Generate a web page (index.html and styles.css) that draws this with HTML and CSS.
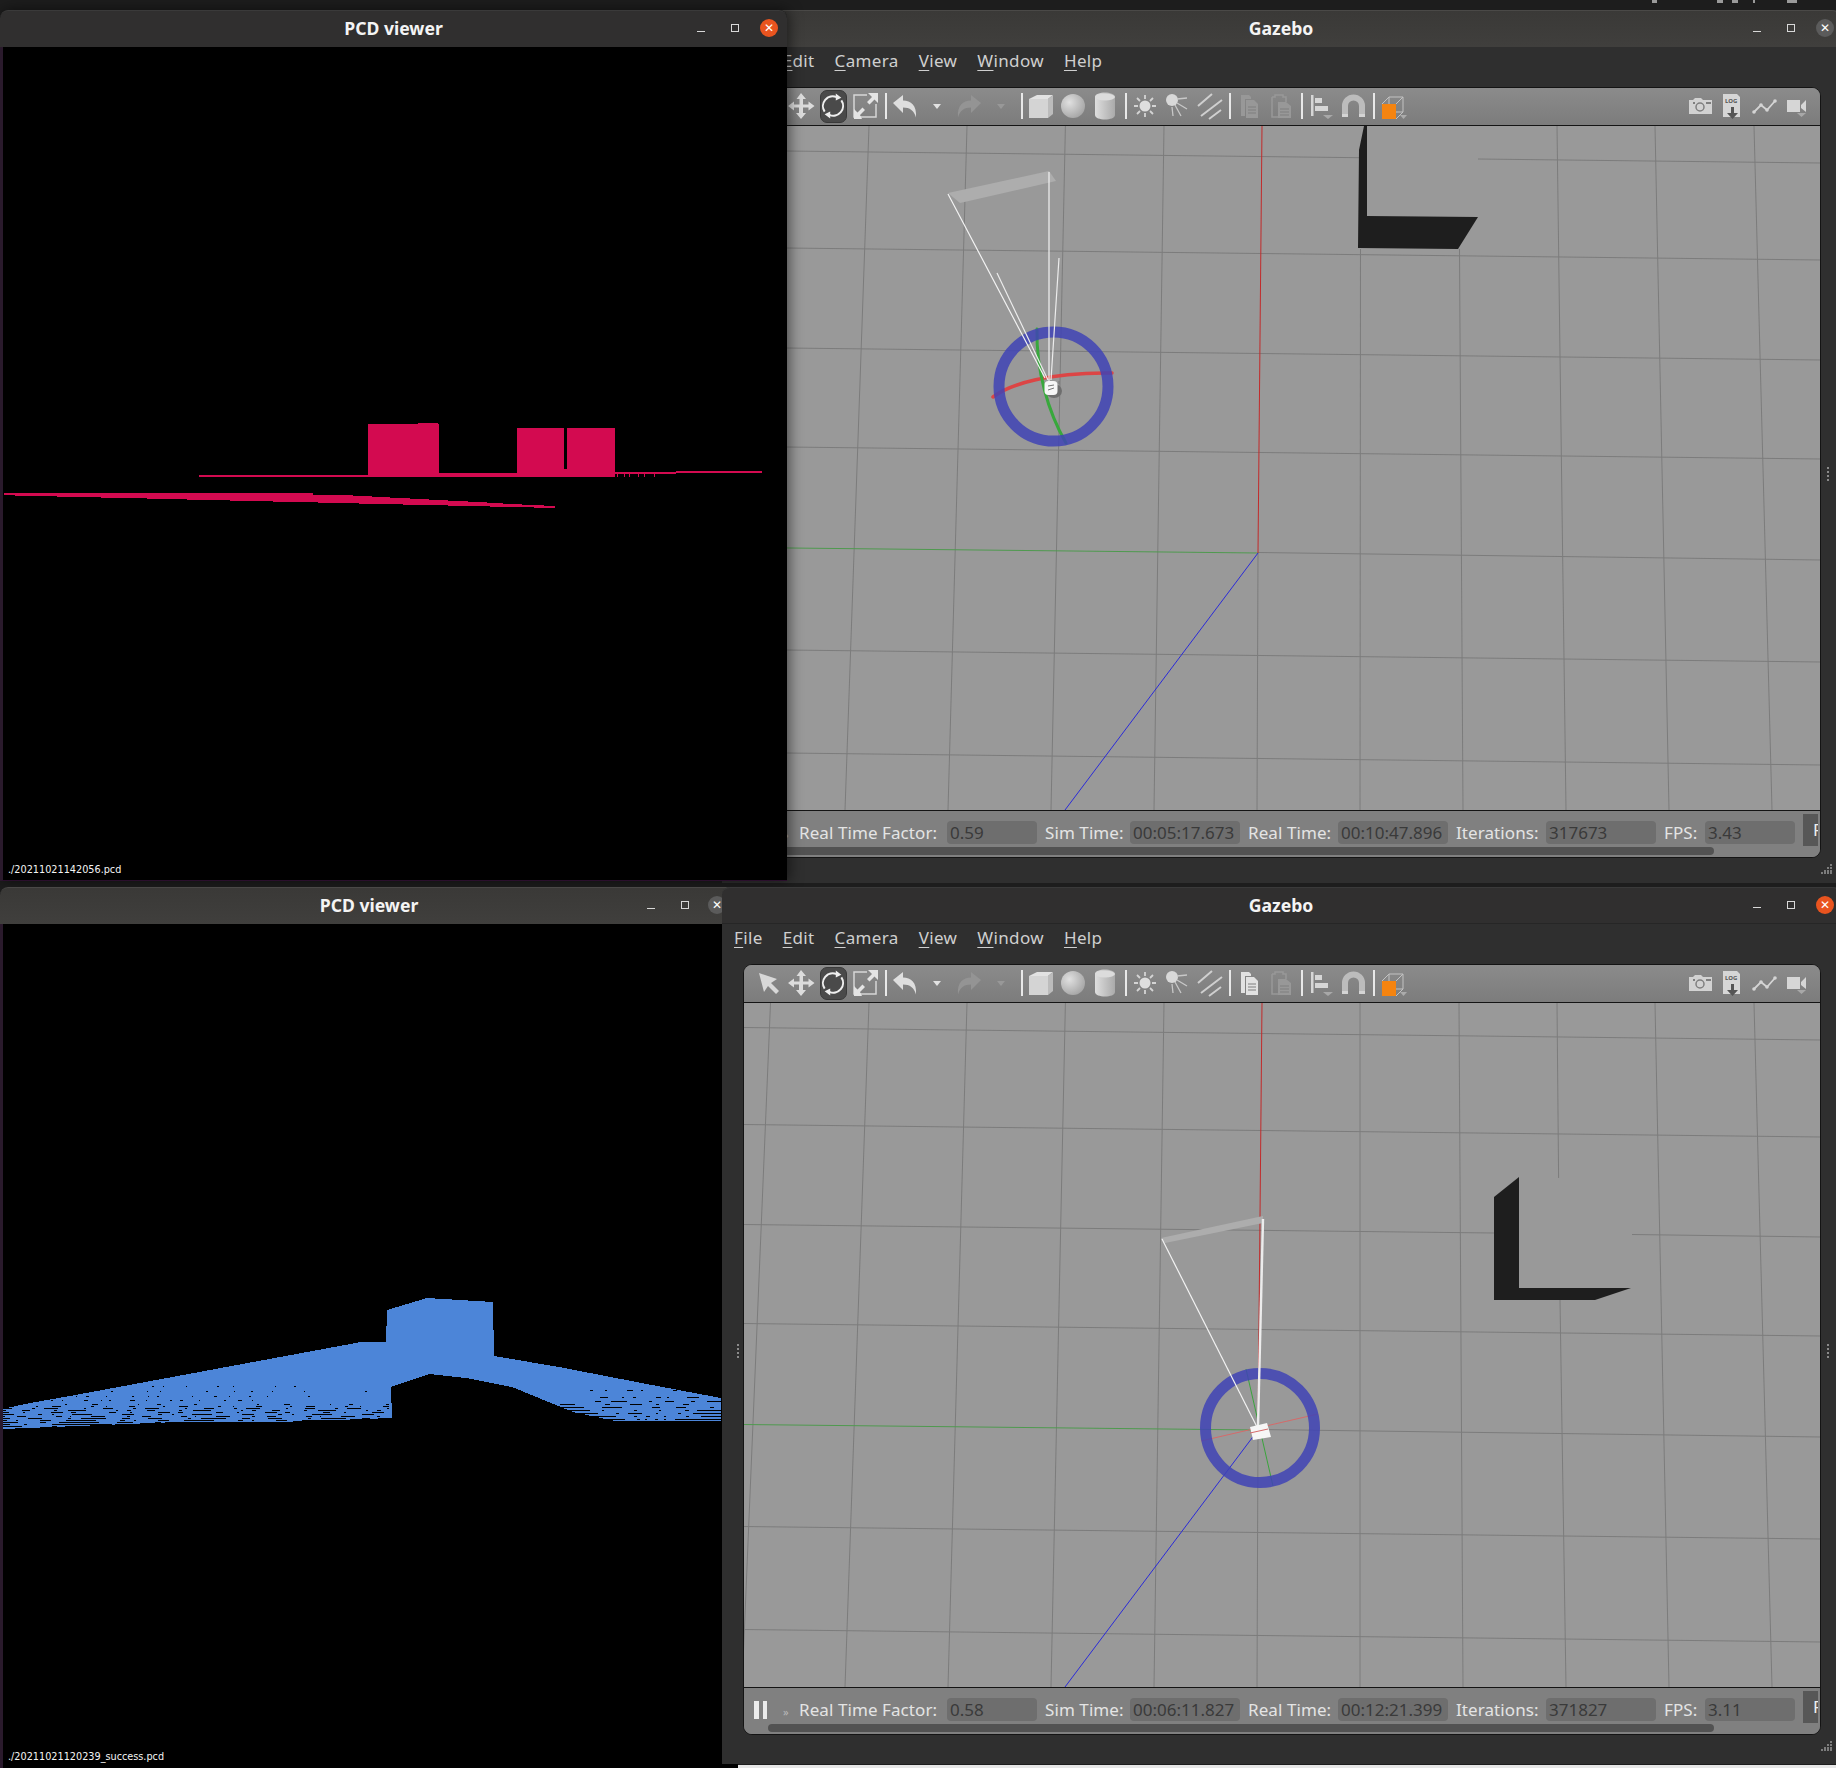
FILE: index.html
```html
<!DOCTYPE html>
<html lang="en">
<head>
<meta charset="utf-8">
<title>PCD viewer and Gazebo</title>
<link rel="stylesheet" href="styles.css">
</head>
<body>
<svg class="defs" width="0" height="0" aria-hidden="true">
  <defs>
    <radialGradient id="g-sphere" cx="35%" cy="35%" r="75%"><stop offset="0" stop-color="#e0e0e0"/><stop offset="1" stop-color="#a2a2a2"/></radialGradient>
    <linearGradient id="g-cyl"><stop offset="0" stop-color="#dedede"/><stop offset="1" stop-color="#aaaaaa"/></linearGradient>
    <symbol id="i-arrow" viewBox="0 0 28 28"><path fill="#d8d8d8" d="M4 4l18 6-6 4 8 8-3 3-8-8-4 6z"/></symbol>
    <symbol id="i-move" viewBox="0 0 28 28"><path fill="#dcdcdc" d="M14 1l5 6h-3v5.500h5.500V9.500l6 4.500-6 4.500v-3h-5.500V21h3l-5 6-5-6h3v-5.500H7v3L1 14l6-4.500v3h5.500V7h-3z"/></symbol>
    <symbol id="i-rotate" viewBox="0 0 28 28"><g fill="none" stroke="#eee" stroke-width="2.200"><path d="M5 20A10.500 10.500 0 0 1 18 4.500"/><path d="M23 8A10.500 10.500 0 0 1 10 23.500"/></g><path fill="#eee" d="M17 .5l6 4.500-6 3zM11 27.500l-6-4.500 6-3z"/></symbol>
    <symbol id="i-scale" viewBox="0 0 28 28"><path fill="none" stroke="#d6d6d6" stroke-width="1.500" d="M16 3H3v22h22V12"/><path fill="#e4e4e4" d="M27 1v10l-3.500-3.500-5 5-2.500-2.500 5-5L17 1zM3 27V17l3.500 3.500 5-5 2.500 2.500-5 5L11 27z"/></symbol>
    <symbol id="i-undo" viewBox="0 0 28 28"><path fill="#dedede" d="M2 11l10-8v5.500c8 0 14 5 13 17-2-7-6-10-13-10V21z"/></symbol>
    <symbol id="i-redo" viewBox="0 0 28 28"><path fill="#949494" d="M26 11L16 3v5.500c-8 0-14 5-13 17 2-7 6-10 13-10V21z"/></symbol>
    <symbol id="i-drop" viewBox="0 0 28 28"><path fill="currentColor" d="M10 12h8l-4 5z"/></symbol>
    <symbol id="i-box" viewBox="0 0 28 28"><path fill="#d4d4d4" d="M2 7h19v19H2z"/><path fill="#e2e2e2" d="M2 7l8-4h16l-5 4z"/><path fill="#bcbcbc" d="M21 7l5-4v19l-5 4z"/></symbol>
    <symbol id="i-sphere" viewBox="0 0 28 28"><circle cx="14" cy="14" r="12" fill="url(#g-sphere)"/></symbol>
    <symbol id="i-cyl" viewBox="0 0 28 28"><path fill="url(#g-cyl)" d="M4 5c0-6 20-6 20 0v18c0 6-20 6-20 0z"/><ellipse cx="14" cy="5" rx="10" ry="3.500" fill="#dcdcdc"/></symbol>
    <symbol id="i-sun" viewBox="0 0 28 28"><circle cx="14" cy="14" r="5.500" fill="#dedede"/><g stroke="#d4d4d4" stroke-width="1.800"><path d="M14 3v4M14 21v4M3 14h4M21 14h4M6 6l3 3M19 19l3 3M22 6l-3 3M9 19l-3 3"/></g></symbol>
    <symbol id="i-spot" viewBox="0 0 28 28"><circle cx="9" cy="8" r="6" fill="#d8d8d8"/><g stroke="#c8c8c8" stroke-width="1.300"><path d="M14 7l10-1M14 11l10 6M12 13l6 11M9 15l1 9"/></g></symbol>
    <symbol id="i-dir" viewBox="0 0 28 28"><g stroke="#cfcfcf" stroke-width="2"><path d="M3 14L17 2M6 24l21-16M14 27l12-9"/></g></symbol>
    <symbol id="i-copy" viewBox="0 0 28 28"><path fill="currentColor" d="M6 3h8l2 2v2H10v17H6z"/><path fill="currentColor" d="M11 8h8l4 4v14H11z"/><path stroke="#7f7f7f" d="M13 15h8M13 18h8M13 21h8"/></symbol>
    <symbol id="i-paste" viewBox="0 0 28 28"><path fill="none" stroke="currentColor" stroke-width="1.500" d="M5 5h3V3h8v2h3v5M5 5v20h6"/><path fill="currentColor" d="M11 10h8l5 4v12H11z"/><path stroke="#7f7f7f" d="M13 17h9M13 20h9M13 23h9"/></symbol>
    <symbol id="i-align" viewBox="0 0 28 28"><path fill="#d6d6d6" d="M4 3h2.500v21H4zM8 6h7v5H8zM8 14h13v5H8z"/><path fill="#a8a8a8" d="M16 23h10l-5 4z"/></symbol>
    <symbol id="i-magnet" viewBox="0 0 28 28"><path fill="none" stroke="#bcbcbc" stroke-width="6" d="M6 25V14a8.500 8.500 0 0 1 17 0v11"/><path stroke="#d4d4d4" stroke-width="6" d="M6 22v3M23 22v3"/></symbol>
    <symbol id="i-view" viewBox="0 0 28 28"><path fill="none" stroke="#c2c2c2" d="M3 12l7-7h14v15l-7 7M10 5v15h14M17 12l7-7"/><path fill="#f58410" d="M3 12h14v15H3z"/><path fill="#ababab" d="M21 23h7l-3.500 4z"/></symbol>
    <symbol id="i-cam" viewBox="0 0 28 28"><path fill="#d2d2d2" d="M3 8h4l2-2h6l2 2h9v14H3z"/><circle cx="14" cy="15" r="4" fill="none" stroke="#7f7f7f" stroke-width="1.500"/><path fill="#7f7f7f" d="M20 10h5v2h-5zM7 10h2v2H7z"/></symbol>
    <symbol id="i-log" viewBox="0 0 28 28"><path fill="#d6d6d6" d="M5 2h14l3 3v20H5z"/><text x="7" y="11" class="log-text">LOG</text><path fill="#555" d="M13 15h3v6h4l-5.500 6L9 21h4z"/></symbol>
    <symbol id="i-plot" viewBox="0 0 28 28"><path fill="none" stroke="#d4d4d4" stroke-width="1.800" d="M4 20l7-7 6 5 8-9"/><g fill="#d4d4d4"><circle cx="4" cy="20" r="1.800"/><circle cx="11" cy="13" r="1.800"/><circle cx="17" cy="18" r="1.800"/><circle cx="25" cy="9" r="1.800"/></g></symbol>
    <symbol id="i-video" viewBox="0 0 28 28"><path fill="#d6d6d6" d="M5 8h13v12H5zM19 13l5-5v12l-5-4z"/><path fill="#a8a8a8" d="M15 21h9l-4.500 4z"/></symbol>
  </defs>
</svg>

<div class="top-marks"><i class="mark m-a"></i><i class="mark m-b"></i><i class="mark m-b"></i><i class="mark m-c"></i><i class="mark m-d"></i></div>

<section class="gazebo gazebo-top">
  <header class="title-bar light">
    <span></span><span class="title">Gazebo</span>
    <div class="controls"><span class="ctl"><i class="min"></i></span><span class="ctl"><i class="max"></i></span><span class="ctl"><i class="close gray">✕</i></span></div>
  </header>
  <nav class="menu"><span><u>F</u>ile</span><span><u>E</u>dit</span><span><u>C</u>amera</span><span><u>V</u>iew</span><span><u>W</u>indow</span><span><u>H</u>elp</span></nav>
  <div class="panel">
    <div class="toolbar">
      <svg class="ic"><use href="#i-arrow"/></svg><svg class="ic"><use href="#i-move"/></svg><span class="ic-active"><svg class="ic"><use href="#i-rotate"/></svg></span><svg class="ic"><use href="#i-scale"/></svg><i class="sep"></i>
      <svg class="ic"><use href="#i-undo"/></svg><svg class="ic bright"><use href="#i-drop"/></svg><svg class="ic"><use href="#i-redo"/></svg><svg class="ic faint"><use href="#i-drop"/></svg><i class="sep"></i>
      <svg class="ic"><use href="#i-box"/></svg><svg class="ic"><use href="#i-sphere"/></svg><svg class="ic"><use href="#i-cyl"/></svg><i class="sep"></i>
      <svg class="ic"><use href="#i-sun"/></svg><svg class="ic"><use href="#i-spot"/></svg><svg class="ic"><use href="#i-dir"/></svg><i class="sep"></i>
      <svg class="ic faint"><use href="#i-copy"/></svg><svg class="ic faint"><use href="#i-paste"/></svg><i class="sep"></i>
      <svg class="ic"><use href="#i-align"/></svg><svg class="ic"><use href="#i-magnet"/></svg><i class="sep"></i>
      <svg class="ic"><use href="#i-view"/></svg>
      <span class="tool-right"><svg class="ic"><use href="#i-cam"/></svg><svg class="ic"><use href="#i-log"/></svg><svg class="ic"><use href="#i-plot"/></svg><svg class="ic"><use href="#i-video"/></svg></span>
    </div>
    <svg class="scene" viewBox="744 126 1076 684">
      <path class="grid" d="M770.500 126L742 810M869 126L845 810M967 126L948 810M1065.400 126L1051 810M1164 126L1154 810M1258 553L1257 810M1655 126L1669 810M1754 126L1772 810M743 247.500L1821 260M743 446.500L1821 459M1258 552.500L1821 560M743 649.500L1821 662M743 752.500L1821 765"/>
      <path class="grid" d="M743 150.500L1359 157.700M1478 159L1821 163M743 347.500L1821 360M1360.500 249L1360 810M1459.500 249L1463 810M1557 126L1566 810"/>
      <path class="ax-green" d="M743 547.500L1258 553"/><path class="ax-red" d="M1262 126L1258 553"/><path class="ax-blue" d="M1258 553L1065 810"/>
      <path class="wall" d="M1364 126L1359 150L1358 248L1458 249L1478 217L1367 216V126z"/>
      <path class="laser-bar" d="M948 193L1049 171L1056 181L960 203z"/>
      <path class="arc-red" d="M993 397C1010 384 1050 372 1112 373"/><path class="arc-green" d="M1037 329C1036 370 1048 412 1066 443"/>
      <circle class="ring" cx="1053.500" cy="386.500" r="54.500"/>
      <path class="laser" d="M948 194L1045 378M1049 172V382"/><path class="laser thin" d="M997 273L1048 380M1059 258L1051 380"/>
      <ellipse class="robot-shadow" cx="1054" cy="391" rx="8" ry="7"/>
      <rect class="robot" x="1044.500" y="381" width="13" height="14" rx="4"/>
      <path class="robot-mark" d="M1048 386l6-1M1048 390l6-2M1059 381v3"/>
    </svg>
    <div class="status">
      <div class="status-row">
        <span class="pause"><i></i><i></i></span><span class="ff">»</span>
        <span class="lbl w-140">Real Time Factor:</span><span class="field w-90">0.59</span>
        <span class="lbl w-77">Sim Time:</span><span class="field w-110">00:05:17.673</span>
        <span class="lbl w-82">Real Time:</span><span class="field w-110">00:10:47.896</span>
        <span class="lbl w-82">Iterations:</span><span class="field w-110">317673</span>
        <span class="lbl w-33">FPS:</span><span class="field w-90">3.43</span>
        <span class="reset">Reset Time</span>
      </div>
      <div class="scroll"></div>
    </div>
  </div>
  <i class="handle handle-right"></i>
  <svg class="grip" viewBox="0 0 11 10"><path d="M9 0h2v2H9zM6 3h2v2H6zM9 3h2v2H9zM3 6h2v2H3zM6 6h2v2H6zM9 6h2v2H9zM0 8h2v2H0zM3 8h2v2H3zM6 8h2v2H6zM9 8h2v2H9z"/></svg>
</section>

<section class="pcd pcd-top">
  <header class="title-bar dark">
    <span></span><span class="title">PCD viewer</span>
    <div class="controls"><span class="ctl"><i class="min"></i></span><span class="ctl"><i class="max"></i></span><span class="ctl"><i class="close orange">✕</i></span></div>
  </header>
  <div class="canvas">
    <svg class="cloud" viewBox="3 47 784 833">
      <path class="red" d="M199 475h169v-51h50v-1h20v1h1v49h78v-45h47v41h3v-41h48v44h61v-1h86v2h-86v1h-61v3H199z"/>
      <path class="red" d="M4 493H313V495H353V496H372V497H390V498H410V499H429V500H448V501H468V502H487V503H503V504H522V505H544V506H555V508H534V507H490V506H448V505H403V504H359V503H318V502H273V501H230V500H187V499H147V498H101V497H57V496H15V495H4z"/>
      <path class="red-dots" d="M617 474v3M624 474v3M629 474v3M638 474v3M644 474v3M654 474v3"/>
    </svg>
    <span class="caption">./20211021142056.pcd</span>
  </div>
</section>

<section class="gazebo gazebo-bottom">
  <header class="title-bar dark">
    <span></span><span class="title">Gazebo</span>
    <div class="controls"><span class="ctl"><i class="min"></i></span><span class="ctl"><i class="max"></i></span><span class="ctl"><i class="close orange">✕</i></span></div>
  </header>
  <nav class="menu"><span><u>F</u>ile</span><span><u>E</u>dit</span><span><u>C</u>amera</span><span><u>V</u>iew</span><span><u>W</u>indow</span><span><u>H</u>elp</span></nav>
  <div class="panel">
    <div class="toolbar">
      <svg class="ic"><use href="#i-arrow"/></svg><svg class="ic"><use href="#i-move"/></svg><span class="ic-active"><svg class="ic"><use href="#i-rotate"/></svg></span><svg class="ic"><use href="#i-scale"/></svg><i class="sep"></i>
      <svg class="ic"><use href="#i-undo"/></svg><svg class="ic bright"><use href="#i-drop"/></svg><svg class="ic"><use href="#i-redo"/></svg><svg class="ic faint"><use href="#i-drop"/></svg><i class="sep"></i>
      <svg class="ic"><use href="#i-box"/></svg><svg class="ic"><use href="#i-sphere"/></svg><svg class="ic"><use href="#i-cyl"/></svg><i class="sep"></i>
      <svg class="ic"><use href="#i-sun"/></svg><svg class="ic"><use href="#i-spot"/></svg><svg class="ic"><use href="#i-dir"/></svg><i class="sep"></i>
      <svg class="ic bright"><use href="#i-copy"/></svg><svg class="ic faint"><use href="#i-paste"/></svg><i class="sep"></i>
      <svg class="ic"><use href="#i-align"/></svg><svg class="ic"><use href="#i-magnet"/></svg><i class="sep"></i>
      <svg class="ic"><use href="#i-view"/></svg>
      <span class="tool-right"><svg class="ic"><use href="#i-cam"/></svg><svg class="ic"><use href="#i-log"/></svg><svg class="ic"><use href="#i-plot"/></svg><svg class="ic"><use href="#i-video"/></svg></span>
    </div>
    <svg class="scene" viewBox="744 126 1076 684">
      <path class="grid" d="M770.500 126L742 810M869 126L845 810M967 126L948 810M1065.400 126L1051 810M1164 126L1154 810M1258 553L1257 810M1655 126L1669 810M1754 126L1772 810M743 247.500L1821 260M743 446.500L1821 459M1258 552.500L1821 560M743 649.500L1821 662M743 752.500L1821 765"/>
      <path class="grid" d="M743 150.500L1821 163M743 347.500L1494 356M1632 357.500L1821 360M1360 126L1360 810M1459 126L1463 810M1557 126L1558.600 301M1560 423L1566 810"/>
      <path class="ax-green" d="M743 547.500L1258 553"/><path class="ax-red" d="M1262 126L1258 553"/><path class="ax-blue" d="M1258 553L1065 810"/>
      <path class="wall" d="M1519 300L1494 320L1494 423L1595 423L1631 411L1519 411z"/>
      <path class="laser-bar" d="M1161 361L1263 339L1263 346L1165 366z"/>
      <path class="line-red" d="M1201 564L1318 537"/><path class="line-green" d="M1246 492L1273 609"/>
      <circle class="ring" cx="1260" cy="551" r="54.500"/>
      <path class="laser" d="M1162 362L1257 550"/><path class="laser wide" d="M1263 342L1258 550"/>
      <path class="robot" d="M1250 550L1267 546L1271 560L1253 563z"/>
      <path class="line-red" d="M1250 556L1268 552"/>
    </svg>
    <div class="status">
      <div class="status-row">
        <span class="pause"><i></i><i></i></span><span class="ff">»</span>
        <span class="lbl w-140">Real Time Factor:</span><span class="field w-90">0.58</span>
        <span class="lbl w-77">Sim Time:</span><span class="field w-110">00:06:11.827</span>
        <span class="lbl w-82">Real Time:</span><span class="field w-110">00:12:21.399</span>
        <span class="lbl w-82">Iterations:</span><span class="field w-110">371827</span>
        <span class="lbl w-33">FPS:</span><span class="field w-90">3.11</span>
        <span class="reset">Reset Time</span>
      </div>
      <div class="scroll"></div>
    </div>
  </div>
  <i class="handle handle-left"></i>
  <i class="handle handle-right"></i>
  <svg class="grip" viewBox="0 0 11 10"><path d="M9 0h2v2H9zM6 3h2v2H6zM9 3h2v2H9zM3 6h2v2H3zM6 6h2v2H6zM9 6h2v2H9zM0 8h2v2H0zM3 8h2v2H3zM6 8h2v2H6zM9 8h2v2H9z"/></svg>
</section>

<section class="pcd pcd-bottom">
  <header class="title-bar light">
    <span></span><span class="title">PCD viewer</span>
    <div class="controls"><span class="ctl"><i class="min"></i></span><span class="ctl"><i class="max"></i></span><span class="ctl"><i class="close gray">✕</i></span></div>
  </header>
  <div class="canvas">
    <svg class="cloud" viewBox="3 924 735 844">
      <path class="blue" d="M2 1409L30 1403L70 1396L140 1383L210 1370L361 1342L386 1342L387 1310L427 1298L493 1302L494 1356L559 1367L652 1385L721 1398L721 1421L615 1421L573 1412L512 1387L466 1378L429 1374L391 1387L392 1418L279 1422L177 1422L28 1428L2 1429z"/>
      <g class="streaks">
        <path stroke-dasharray="0 150 2 9 1 22 1 30 2 14 1 41 1 18 2 400" d="M2 1386H392"/>
        <path stroke-dasharray="0 88 1 20 2 34 1 12 1 45 2 26 1 16 2 19 1 31 1 60 2 400" d="M2 1391H392"/>
        <path stroke-dasharray="0 60 2 12 1 9 3 17 1 25 2 14 1 8 2 33 1 21 3 12 1 19 2 16 1 40 2 400" d="M2 1396H392"/>
        <path stroke-dasharray="0 32 3 14 2 9 1 21 4 13 1 7 2 19 5 11 1 23 2 8 3 16 1 24 2 12 4 10 1 400" d="M2 1400H392"/>
        <path stroke-dasharray="3 60 2 25 6 40 1 18 4 33" d="M2 1404H392"/>
        <path stroke-dasharray="6 28 2 14 9 30 3 12 1 22" d="M2 1406H392"/>
        <path stroke-dasharray="10 20 3 9 14 26 2 17" d="M2 1408H392"/>
        <path stroke-dasharray="4 16 8 24 3 11 18 30 2 9" d="M2 1410H392"/>
        <path stroke-dasharray="7 14 2 26 12 8 5 33" d="M2 1412H392"/>
        <path stroke-dasharray="12 24 4 10 2 18 20 30" d="M2 1414H392"/>
        <path stroke-dasharray="3 12 9 30 6 8 1 20 14 22" d="M2 1416H392"/>
        <path stroke-dasharray="8 18 14 26 3 10 25 16" d="M2 1418H392"/>
        <path stroke-dasharray="5 9 2 22 11 15 30 24" d="M2 1420H392"/>
        <path stroke-dasharray="16 22 6 13 40 18" d="M2 1422H392"/>
        <path stroke-dasharray="8 14 3 25 60 9" d="M2 1424H392"/>
        <path stroke-dasharray="20 30 5 10 90 20" d="M2 1426H392"/>
        <path stroke-dasharray="0 30 3 12 2 20 6 8 2 30 4 12 3 16 1 400" d="M560 1390H721"/>
        <path stroke-dasharray="0 40 8 14 2 9 3 20 5 6 2 18 12 400" d="M560 1397H721"/>
        <path stroke-dasharray="0 35 6 10 16 22 3 13 9 17 4 12 400" d="M560 1401H721"/>
        <path stroke-dasharray="15 30 5 20 12 14 3 24 6 32 400" d="M560 1404H721"/>
        <path stroke-dasharray="24 18 20 30 8 16 10 24 4 400" d="M560 1407H721"/>
        <path stroke-dasharray="30 12 2 30 3 22 2 24 4 8" d="M560 1410H721"/>
        <path stroke-dasharray="38 18 3 9 14 14 2 20 3 12" d="M560 1413H721"/>
        <path stroke-dasharray="56 18 3 9 4 14 2 20 3 12" d="M560 1416H721"/>
        <path stroke-dasharray="65 12 3 5 2 8 3 6 2 9" d="M560 1419H721"/>
      </g>
    </svg>
    <span class="caption">./20211021120239_success.pcd</span>
  </div>
</section>
<div class="desktop-strip"></div>
</body>
</html>
```

FILE: styles.css
```css
* { box-sizing: border-box; }
html, body { margin: 0; padding: 0; }
body {
  position: relative;
  width: 1836px;
  height: 1768px;
  overflow: hidden;
  background: #1d1d1d;
  font-family: "Noto Sans", sans-serif;
}
.defs { position: absolute; }

.top-marks { display: flex; height: 3px; padding-left: 1652px; gap: 0; }
.mark { display: block; height: 3px; background: #9a9a9a; }
.m-a { width: 5px; }
.m-b { width: 6px; margin-left: 60px; }
.m-b + .m-b { margin-left: 9px; }
.m-c { width: 2px; margin-left: 15px; }
.m-d { width: 10px; margin-left: 32px; }

/* Windows on the desktop */
.gazebo, .pcd { position: absolute; display: flex; flex-direction: column; }
.gazebo { left: 722px; width: 1118px; background: #2f2f2f; }
.gazebo-top { top: 10px; height: 873px; }
.gazebo-bottom { top: 887px; height: 877px; border-radius: 8px 0 0 0; z-index: 3; }
.pcd { left: 0; background: #000; border-radius: 8px 8px 0 0; }
.pcd-top { top: 10px; width: 787px; height: 871px; z-index: 2; box-shadow: 2px 0 14px rgba(0, 0, 0, .55); }
.pcd-bottom { top: 887px; width: 738px; height: 881px; z-index: 2; }
.pcd-top .controls { padding-right: 3px; }
.pcd-bottom .controls { padding-right: 6px; }
.pcd-bottom .ctl:last-child { margin-left: -2px; }
.desktop-strip { position: absolute; left: 738px; top: 1765px; width: 1098px; height: 3px; background: #e6e6e6; z-index: 4; }

/* Title bars */
.title-bar {
  flex: none;
  display: grid;
  grid-template-columns: 1fr auto 1fr;
  align-items: center;
  height: 37px;
  padding-bottom: 2px;
  border-radius: 8px 8px 0 0;
}
.title-bar.light { background: linear-gradient(#3a3937, #403f3d); border-top: 1px solid #4a4947; }
.title-bar.dark { background: #302f2f; border-top: 1px solid #3a3a3a; }
.gazebo-bottom .title-bar { border-bottom: 1px solid #262626; }
.title { color: #f4f4f4; font-size: 17.600px; font-weight: 700; }
.controls { display: flex; justify-content: flex-end; gap: 4px; }
.ctl { display: flex; align-items: center; justify-content: center; width: 30px; height: 20px; }
.min { display: block; width: 8px; height: 1px; margin-top: 6px; background: #d8d8d8; }
.max { display: block; width: 8px; height: 8px; border: 1px solid #d8d8d8; }
.close {
  display: flex;
  align-items: center;
  justify-content: center;
  width: 18px;
  height: 18px;
  border-radius: 50%;
  color: #fff;
  font: 700 12px "DejaVu Sans", sans-serif;
}
.close.gray { background: #5b5b5b; }
.close.orange { background: #e9541f; }

/* Menu */
.menu {
  flex: none;
  display: flex;
  gap: 20px;
  align-items: center;
  height: 40px;
  padding: 0 0 13px 12px;
  color: #cfcfcf;
  font-size: 17px;
  letter-spacing: .36px;
}
.menu u { text-underline-offset: 3px; text-decoration-thickness: 1px; }

/* Gazebo inner panel */
.panel {
  flex: none;
  display: flex;
  flex-direction: column;
  width: 1078px;
  height: 771px;
  margin-left: 21px;
  background: #808080;
  border: 1px solid #141414;
  border-radius: 9px;
  overflow: hidden;
}
.toolbar {
  flex: none;
  display: flex;
  align-items: center;
  height: 38px;
  padding-left: 9px;
  padding-right: 8px;
  padding-bottom: 1px;
  background: linear-gradient(#8b8b8b, #7c7c7c);
  border-bottom: 1px solid #141414;
}
.ic { flex: none; width: 32px; height: 28px; }
.ic-active {
  position: relative;
  flex: none;
  display: flex;
  align-items: center;
  justify-content: center;
  width: 32px;
  height: 33px;
}
.ic-active::before {
  content: "";
  position: absolute;
  left: 3px;
  right: 2px;
  top: 0;
  bottom: 0;
  background: #4a4a4a;
  border: 1px solid #3a3a3a;
  border-radius: 7px;
}
.ic-active .ic { position: relative; height: 26px; }
.bright { color: #e2e2e2; }
.faint { color: #989898; }
.sep { flex: none; display: block; width: 2px; height: 26px; margin: 0 2px 0 4px; background: #e8e8e8; }
.tool-right { display: flex; margin-left: auto; }
.log-text { font: 700 6px "Noto Sans", sans-serif; fill: #555; }

.scene { flex: none; display: block; width: 1076px; height: 684px; background: #999; }
.grid { fill: none; stroke: #7c7c7c; stroke-width: 1; }
.ax-green { fill: none; stroke: #4f9a4f; stroke-width: 1; }
.ax-red { fill: none; stroke: #c22a2a; stroke-width: 1; }
.ax-blue { fill: none; stroke: #2a2ad8; stroke-width: 1; }
.wall { fill: #1e1e1e; }
.laser-bar { fill: #adadad; }
.laser { fill: none; stroke: #f2f2f2; stroke-width: 1.200; }
.laser.thin { stroke: #ececec; stroke-width: 1.200; }
.laser.wide { stroke: #ececec; stroke-width: 2.400; }
.ring { fill: none; stroke: #3f43b5; stroke-width: 11; stroke-opacity: .85; }
.arc-red { fill: none; stroke: #dc4545; stroke-width: 3.500; stroke-linecap: round; }
.arc-green { fill: none; stroke: #38a83c; stroke-width: 3; stroke-linecap: round; }
.line-red { fill: none; stroke: #d56a6a; stroke-width: 1; }
.line-green { fill: none; stroke: #3aa43c; stroke-width: 1; }
.robot { fill: #f6f6f6; }
.robot-shadow { fill: #6e6e6e; }
.robot-mark { fill: none; stroke: #777; stroke-width: 1; }

/* Status bar */
.status { flex: 1; display: flex; flex-direction: column; padding-top: 10px; background: #808080; border-top: 1px solid #141414; min-height: 0; }
.status-row {
  display: flex;
  gap: 8px;
  align-items: stretch;
  height: 23px;
  padding-left: 10px;
  font-size: 17px;
  line-height: 24px;
  white-space: nowrap;
}
.pause { display: flex; gap: 4px; width: 13px; padding: 3px 0 2px; margin-right: 8px; }
.pause i { display: block; width: 5px; background: #ececec; }
.ff { width: 6px; margin-right: 2px; color: #b8b8b8; font-size: 11px; line-height: 28px; }
.lbl { color: #e4e4e4; letter-spacing: .08px; }
.field { padding-left: 3px; color: #3a3a3a; background: #6e6e6e; border-radius: 4px; }
.w-33 { width: 33px; }
.w-77 { width: 77px; }
.w-82 { width: 82px; }
.w-90 { width: 90px; }
.w-110 { width: 110px; }
.w-140 { width: 140px; }
.reset {
  width: 15px;
  height: 32px;
  margin-top: -7px;
  padding-left: 10px;
  overflow: hidden;
  color: #eee;
  background: #575757;
  line-height: 32px;
}
.scroll { width: 946px; height: 8px; margin: 3px 0 0 24px; background: #525252; border-radius: 4px; }

.handle {
  position: absolute;
  top: 457px;
  right: 11px;
  width: 2px;
  height: 14px;
  background: repeating-linear-gradient(#8a8a8a 0 2px, transparent 2px 4px);
}
.handle-left { left: 15px; right: auto; }
.grip { position: absolute; top: 854px; right: 8px; width: 11px; height: 10px; fill: #7d7d7d; }

/* Point clouds */
.canvas { position: relative; flex: 1; min-height: 0; background: #000; border-left: 3px solid #2a1a2c; }
.pcd-top .canvas { border-bottom: 1px solid #2a0f2c; }
.cloud { display: block; width: 100%; height: 100%; shape-rendering: crispEdges; }
.red { fill: #d30a50; }
.red-dots { fill: none; stroke: #d30a50; stroke-width: 1; }
.blue { fill: #4c85d8; }
.streaks { fill: none; stroke: #000; stroke-width: 1; }
.caption {
  position: absolute;
  left: 5px;
  color: #f4f4f4;
  font: 9.700px "DejaVu Sans", sans-serif;
  white-space: nowrap;
}
.pcd-top .caption { top: 817px; }
.pcd-bottom .caption { top: 827px; }
```
